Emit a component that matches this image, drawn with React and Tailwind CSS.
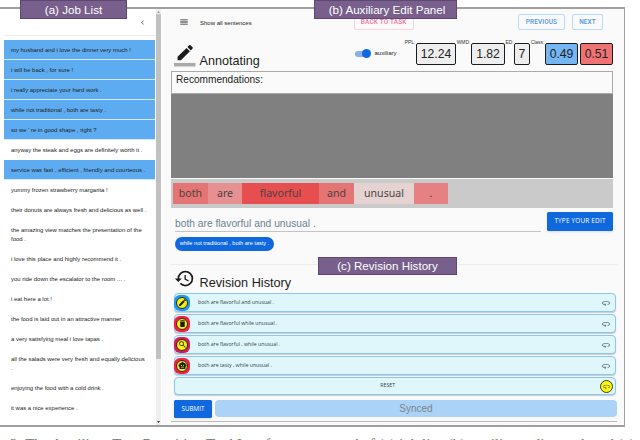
import React from "react";
import { Md360, MdDelete, MdEdit, MdHistory, MdMenu, MdSearch, MdSmartToy, MdChevronLeft } from "react-icons/md";

const jobs = [
  { text: "my husband and i love the dinner very much !", done: true },
  { text: "i will be back , for sure !", done: true },
  { text: "i really appreciate your hard work .", done: true },
  { text: "while not traditional , both are tasty .", done: true },
  { text: "so we ' re in good shape , right ?", done: true },
  { text: "anyway the steak and eggs are definitely worth it ." },
  { text: "service was fast , efficient , friendly and courteous .", done: true },
  { text: "yummy frozen strawberry margarita !" },
  { text: "their donuts are always fresh and delicious as well ." },
  { text: "the amazing view matches the presentation of the food .", tall: true },
  { text: "i love this place and highly recommend it ." },
  { text: "you ride down the escalator to the room ... ." },
  { text: "i eat here a lot !" },
  { text: "the food is laid out in an attractive manner ." },
  { text: "a very satisfying meal i love tapas ." },
  { text: "all the salads were very fresh and equally delicious .", tall: true },
  { text: "enjoying the food with a cold drink ." },
  { text: "it was a nice experience ." },
];

const metrics = [
  { label: "PPL:", value: "12.24", labelClass: "w-[12px]", boxClass: "w-[40px] bg-[#eeeeee]" },
  { label: "WMD:", value: "1.82", labelClass: "w-[15px]", boxClass: "w-[34px] bg-[#eeeeee]" },
  { label: "ED:", value: "7", labelClass: "w-[9px]", boxClass: "w-[16px] bg-[#eeeeee]" },
  { label: "Class:", value: "0.49", labelClass: "w-[15px]", boxClass: "w-[33px] bg-[#74b6f4]" },
  { label: "", value: "0.51", labelClass: "w-[2px]", boxClass: "w-[33px] bg-[#f07374]" },
];

const tokens = [
  { text: "both", className: "w-[35px] bg-[#e57474]" },
  { text: "are", className: "w-[34px] bg-[#e69092]" },
  { text: "flavorful", className: "w-[77px] bg-[#e64e50]" },
  { text: "and", className: "w-[35px] bg-[#e57474]" },
  { text: "unusual", className: "w-[60px] bg-[#e5d3d2]" },
  { text: ".", className: "w-[34px] bg-[#e58182]" },
];

const revisions = [
  { text: "both are flavorful and unusual .", icon: MdEdit, ring: "bg-[#2196f3]" },
  { text: "both are flavorful while unusual .", icon: MdDelete, ring: "bg-[#f71e46]" },
  { text: "both are flavorful , while unusual .", icon: MdSearch, ring: "bg-[#d81b54]" },
  { text: "both are tasty , while unusual .", icon: MdSmartToy, ring: "bg-[#f71e46]" },
];

function PanelLabel({ children, className }) {
  return (
    <div className={`absolute flex items-center justify-center border border-[#5f4774] bg-[#785f8c] text-[11.6px] leading-none whitespace-nowrap text-white ${className}`}>
      {children}
    </div>
  );
}

function JobList() {
  return (
    <aside className="flex w-[162px] shrink-0 bg-white">
      <div className="w-[156px] pl-1">
        <div className="flex h-[27px] items-start justify-end border-b border-[#eeeeee] pt-[9px] pr-[9px]">
          <MdChevronLeft className="h-[9px] w-[9px] text-[#657786]" />
        </div>
        <ul className="pt-1 text-[5.95px] leading-[9px] text-[#222222]">
          {jobs.map((job) => (
            <li
              key={job.text}
              className={`w-[151px] border-b border-[#d5eafc] pt-[5.5px] pl-[7px] ${job.tall ? "h-[29.1px]" : "h-[20.05px]"} ${job.done ? "bg-[#5dabf0]" : "border-transparent"}`}
            >
              <span className="block w-[136px]">{job.text}</span>
            </li>
          ))}
        </ul>
      </div>
      <div className="flex w-[5px] flex-col items-center justify-between bg-[#eeeeee] py-[2px]">
        <svg width="3" height="2" viewBox="0 0 3 2"><path d="M0 2L1.5 0L3 2z" fill="#999" /></svg>
        <div className="mt-[1px] h-[345px] w-full bg-[#c1c1c1]" />
        <div className="flex-1" />
        <svg width="3" height="2" viewBox="0 0 3 2"><path d="M0 0L1.5 2L3 0z" fill="#333" /></svg>
      </div>
    </aside>
  );
}

function Toolbar() {
  return (
    <div className="flex h-[21px] items-end pr-[21px]">
      <MdMenu className="mb-[3px] ml-[8px] h-[10px] w-[10px] text-[#222222]" />
      <span className="mb-[3px] ml-[11px] text-[6px] leading-[8px] text-[#222222]">Show all sentences</span>
      <button type="button" className="ml-[102px] h-[16px] w-[60px] rounded-[2px] border border-[#fbd3de] font-[Roboto] text-[6.5px] leading-[14px] font-medium tracking-[0.15px] whitespace-nowrap text-[#f4729a]">
        BACK TO TASK
      </button>
      <div className="ml-auto flex gap-[7px] font-[Roboto] text-[6.4px] leading-[14px] font-medium tracking-[0.15px] text-[#4795e2]">
        <button type="button" className="h-[16px] w-[47px] rounded-[2px] border border-[#b9dafa]">PREVIOUS</button>
        <button type="button" className="h-[16px] w-[31px] rounded-[2px] border border-[#b9dafa]">NEXT</button>
      </div>
    </div>
  );
}

function AnnotatingHeader() {
  return (
    <div className="flex h-[41px] items-start">
      <svg className="mt-[15px] ml-[3px] h-[21.5px] w-[21.5px]" viewBox="0 0 24 24" fill="#1c1c1c">
        <path d="M17.75 7L14 3.25l-10 10V17h3.75l10-10zm2.96-2.96c.39-.39.39-1.02 0-1.41L18.37.29c-.39-.39-1.02-.39-1.41 0L15 2.25 18.75 6l1.96-1.96z" />
        <path fill="#aaaaaa" d="M0 20h24v4H0z" />
      </svg>
      <h2 className="mt-[24px] ml-[4px] w-[63px] text-[12.6px] leading-[15px] text-[#1c1c1c]">Annotating</h2>
      <div className="mt-[19px] ml-[92px] flex h-[9px] w-[17px] items-center">
        <div className="flex h-[6px] w-[14px] items-center justify-end rounded-full bg-[#84b0ec]">
          <div className="-mr-[2px] h-[9px] w-[9px] shrink-0 rounded-full bg-[#0f68de]" />
        </div>
      </div>
      <span className="mt-[19px] ml-[3px] w-[26px] text-[6px] leading-[8px] text-[#222222]">auxiliary</span>
      <div className="mt-[13px] ml-auto flex pr-[11px]">
        {metrics.map((metric) => (
          <div key={metric.value} className="flex">
            <span className={`-mt-[3px] overflow-visible text-center text-[4.9px] leading-[5px] whitespace-nowrap text-[#333333] ${metric.labelClass}`}>
              {metric.label}
            </span>
            <span className={`flex h-[22px] items-center justify-center rounded-[2px] border border-[#1c1c1c] text-[12.2px] leading-none text-[#222222] ${metric.boxClass}`}>
              {metric.value}
            </span>
          </div>
        ))}
      </div>
    </div>
  );
}

function EditArea() {
  return (
    <section className="w-[442px]">
      <div className="h-[23px] border border-[#aaaaaa] pt-[1px] pl-1 text-[10.1px] leading-[14px] text-[#222222]">
        Recommendations:
      </div>
      <div className="h-[84px] bg-[#808080]" />
      <div className="mt-[1px] flex h-[29px] items-center bg-[#cacaca] pl-[2px]">
        {tokens.map((token) => (
          <span
            key={token.text}
            className={`flex h-[21px] items-center justify-center font-['Noto_Sans'] text-[10.6px] leading-none text-[#4c4242] ${token.className}`}
          >
            {token.text}
          </span>
        ))}
      </div>
      <div className="flex h-[24px] items-end justify-between pl-1">
        <div className="h-[16px] w-[366px] border-b border-[#c4c4c4] text-[10.25px] leading-[15px] text-[#6c8293]">
          both are flavorful and unusual .
        </div>
        <button type="button" className="mb-px h-[19px] w-[66px] rounded-[1.5px] bg-[#0f68de] font-['Open_Sans'] text-[6.4px] leading-none tracking-[0.2px] text-white shadow-sm">
          TYPE YOUR EDIT
        </button>
      </div>
      <div className="mt-[5px] ml-1 flex h-[14px] w-[99px] items-center justify-center rounded-full bg-[#0f68de] text-[5.6px] leading-none text-white">
        while not traditional , both are tasty .
      </div>
    </section>
  );
}

function RevisionHistory() {
  return (
    <section className="mt-[13px] w-[446px] border-t border-[#ececec]">
      <div className="flex h-[28px] items-start pl-[3px]">
        <MdHistory className="mt-[3px] h-[21px] w-[21px] text-[#1c1c1c]" />
        <h2 className="mt-[11px] ml-[4.5px] text-[12.7px] leading-[15px] text-[#1c1c1c]">Revision History</h2>
      </div>
      <div className="ml-[3px] flex w-[442px] flex-col gap-[2px] font-['Open_Sans'] text-[5.2px] text-[#34434a]">
        {revisions.map(({ text, icon: Icon, ring }) => (
          <div key={text} className="flex h-[19px] items-center rounded-[4px] border border-[#8cc6ee] bg-[#dff6fb] shadow-[0_1px_1px_#c4ccd0]">
            <div className={`-ml-px flex h-[16px] w-[16px] items-center justify-center rounded-[6px] ${ring}`}>
              <div className="flex h-[12px] w-[12px] items-center justify-center rounded-full border border-[#252d20] bg-[#f7ee12]">
                <Icon className="h-[9px] w-[9px] shrink-0 text-[#1c1c1c]" />
              </div>
            </div>
            <span className="ml-[8px]">{text}</span>
            <Md360 className="mr-[4px] ml-auto h-[10px] w-[10px] text-[#687e8c]" />
          </div>
        ))}
        <div className="flex h-[18px] items-center justify-end rounded-[4px] border border-[#8cc6ee] bg-[#dff6fb] pr-[2px] shadow-[0_1px_1px_#c4ccd0]">
          <span className="mr-[205px]">RESET</span>
          <span className="flex h-[13px] w-[13px] items-center justify-center rounded-full border border-[#3b3e18] bg-[#fbf80b]">
            <Md360 className="h-[9px] w-[9px] text-[#777b26]" />
          </span>
        </div>
      </div>
      <div className="mt-[4px] flex h-[23px] items-start gap-[3px] border-b border-[#bababa] pt-px pl-[3px]">
        <button type="button" className="h-[18px] w-[38px] rounded-[1.5px] bg-[#0f68de] font-['Open_Sans'] text-[6.2px] leading-none tracking-[0.1px] text-white shadow-sm">
          SUBMIT
        </button>
        <div className="flex h-[17px] flex-1 items-center justify-center rounded-[4px] bg-[#abd3f7] text-[10px] leading-none text-[#7b848c]">
          Synced
        </div>
      </div>
    </section>
  );
}

export default function App() {
  return (
    <div className="relative h-[440px] w-[640px] overflow-hidden bg-white pt-[7px] font-['Liberation_Sans',sans-serif]">
      <div className="flex h-[420px] w-[625px] overflow-hidden border-t-2 border-r border-b-2 border-[#a0a0a0]">
        <JobList />
        <main className="flex-1 bg-[#fafafa] pl-[9px]">
          <Toolbar />
          <AnnotatingHeader />
          <EditArea />
          <RevisionHistory />
        </main>
      </div>
      <p className="mt-[9px] pl-[10px] font-['Liberation_Serif',serif] text-[15px] leading-[17px] whitespace-nowrap text-[#777777]">
        2: The Auxiliary Text Rewriting Tool Interface, composed of (a) job list, (b) auxiliary edit panel, and (c)
      </p>
      <PanelLabel className="top-0 left-[20px] h-[19px] w-[107px]">(a) Job List</PanelLabel>
      <PanelLabel className="top-0 left-[314px] h-[19px] w-[143px] pl-[3px]">(b) Auxiliary Edit Panel</PanelLabel>
      <PanelLabel className="top-[257px] left-[318px] h-[18px] w-[139px]">(c) Revision History</PanelLabel>
    </div>
  );
}
